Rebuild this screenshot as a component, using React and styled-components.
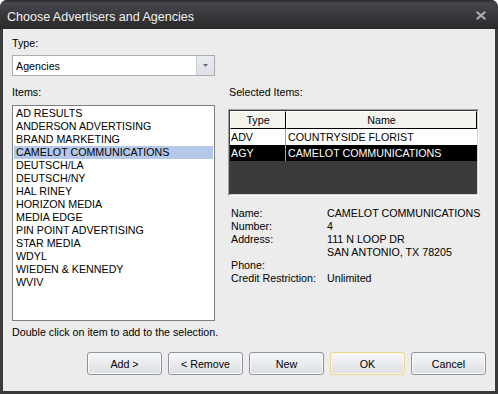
import React from 'react';
import styled, { createGlobalStyle } from 'styled-components';

const GlobalStyle = createGlobalStyle`
	html,
	body {
		margin: 0;
		padding: 0;
		background: #ffffff;
	}
	body {
		font-family: 'Liberation Sans', Arial, sans-serif;
		font-size: 10.7px;
		color: #000;
	}
`;

const Window = styled.div`
	width: 498px;
	height: 394px;
	display: flex;
	flex-direction: column;
	border-radius: 7px 7px 0 0;
	overflow: hidden;
	background: #3b3b3b;
`;

const TitleBar = styled.div`
	height: 29px;
	box-sizing: border-box;
	flex-shrink: 0;
	display: flex;
	align-items: center;
	justify-content: space-between;
	padding: 4px 11px 0 7px;
	background: linear-gradient(#2a2a2e 0px, #46464d 3px, #3b3b40 12px, #2f2f31 24px, #2a2a2a 29px);
	color: #f2f2f2;
	font-size: 12.5px;
`;

const CloseBox = styled.div`
	align-self: flex-start;
	margin-top: 7px;
	width: 12px;
	height: 9px;
	display: flex;
`;

const Frame = styled.div`
	flex: 1;
	display: flex;
	padding: 0 3px 3px 3px;
`;

const Client = styled.div`
	flex: 1;
	display: flex;
	flex-direction: column;
	background: #ececec;
	padding: 8px 9px 0 9px;
`;

const Label = styled.div`
	line-height: 13px;
	height: 13px;
	white-space: nowrap;
	padding-left: ${(p) => p.$indent || 0}px;
	margin-bottom: ${(p) => p.$gap || 0}px;
`;

const Combo = styled.div`
	width: 203px;
	height: 21px;
	box-sizing: border-box;
	display: flex;
	border: 1px solid #a9adb3;
	background: #fff;
`;

const ComboText = styled.div`
	flex: 1;
	display: flex;
	align-items: center;
	padding-left: 3px;
`;

const ComboArrow = styled.div`
	width: 17px;
	display: flex;
	align-items: center;
	justify-content: center;
	border-left: 1px solid #cdd1d6;
	background: linear-gradient(#e8ebef, #dde1e7);
`;

const Panes = styled.div`
	display: grid;
	grid-template-columns: 203px 251px;
	column-gap: 13px;
	margin-top: 10px;
`;

const Column = styled.div`
	display: flex;
	flex-direction: column;
`;

const ListBox = styled.div`
	height: 216px;
	box-sizing: border-box;
	border: 1px solid #7f7f7f;
	background: #fff;
	padding: 1px;
`;

const ListItem = styled.div`
	height: 13px;
	line-height: 13px;
	padding-left: 2px;
	white-space: nowrap;
	background: ${(p) => (p.$selected ? '#b5c8ea' : 'transparent')};
`;

const GridOuter = styled.div`
	height: 87px;
	box-sizing: border-box;
	border: 1px solid;
	border-color: #a0a0a0 #ffffff #ffffff #a0a0a0;
	display: flex;
`;

const GridInner = styled.div`
	flex: 1;
	display: flex;
	flex-direction: column;
	border: 1px solid;
	border-color: #404040 #d4d0c8 #d4d0c8 #404040;
	background: #3b3b3b;
`;

const GridRow = styled.div`
	display: flex;
	height: ${(p) => (p.$header ? 18 : 16)}px;
	box-sizing: border-box;
	background: ${(p) => (p.$header ? '#f4f3ee' : p.$active ? '#000' : '#fff')};
	color: ${(p) => (p.$active ? '#fff' : '#000')};
`;

const HeadCell = styled.div`
	width: ${(p) => (p.$w ? `${p.$w}px` : 'auto')};
	flex: ${(p) => (p.$w ? 'none' : 1)};
	box-sizing: border-box;
	display: flex;
	align-items: center;
	justify-content: center;
	border-top: 1px solid #fff;
	border-left: 1px solid #fff;
	border-right: 1px solid #000;
	border-bottom: 1px solid #000;
`;

const Cell = styled.div`
	width: ${(p) => (p.$w ? `${p.$w}px` : 'auto')};
	flex: ${(p) => (p.$w ? 'none' : 1)};
	box-sizing: border-box;
	display: flex;
	align-items: center;
	padding-left: ${(p) => (p.$w ? 1 : 2)}px;
	border-right: ${(p) => (p.$w ? '1px solid #a0a0a0' : 'none')};
	white-space: nowrap;
	overflow: hidden;
`;

const Details = styled.div`
	display: grid;
	grid-template-columns: 96px auto;
	line-height: 13px;
	margin-top: 11px;
	padding-left: 3px;
	white-space: nowrap;
`;

const Hint = styled.div`
	margin-top: 5px;
	line-height: 13px;
	white-space: nowrap;
`;

const ButtonRow = styled.div`
	display: flex;
	justify-content: flex-end;
	gap: 6px;
	margin-top: 13px;
`;

const Button = styled.button`
	width: 75px;
	height: 23px;
	padding: 0;
	font-family: inherit;
	font-size: 10.7px;
	color: #000;
	border-radius: 3px;
	border: 1px solid ${(p) => (p.$default ? '#e9d690' : '#8e949b')};
	box-shadow: inset 0 0 0 1px ${(p) => (p.$default ? '#fbf5dc' : '#f8f9fa')};
	background: linear-gradient(#f7f8f9, #e9ebee 50%, #dcdfe3);
`;

const items = [
	'AD RESULTS',
	'ANDERSON ADVERTISING',
	'BRAND MARKETING',
	'CAMELOT COMMUNICATIONS',
	'DEUTSCH/LA',
	'DEUTSCH/NY',
	'HAL RINEY',
	'HORIZON MEDIA',
	'MEDIA EDGE',
	'PIN POINT ADVERTISING',
	'STAR MEDIA',
	'WDYL',
	'WIEDEN & KENNEDY',
	'WVIV',
];

const selected = [
	{ type: 'ADV', name: 'COUNTRYSIDE FLORIST' },
	{ type: 'AGY', name: 'CAMELOT COMMUNICATIONS', active: true },
];

const App = () => {
	return (
		<>
			<GlobalStyle />
			<Window>
				<TitleBar>
					<span>Choose Advertisers and Agencies</span>
					<CloseBox>
						<svg width='12' height='9' viewBox='0 0 12 9'>
							<path d='M2.5 1.5 L9.5 7.5 M9.5 1.5 L2.5 7.5' stroke='#a3adb7' strokeWidth='2.2' strokeLinecap='square' />
						</svg>
					</CloseBox>
				</TitleBar>
				<Frame>
					<Client>
						<Label $gap={5}>Type:</Label>
						<Combo>
							<ComboText>Agencies</ComboText>
							<ComboArrow>
								<svg width='5' height='3' viewBox='0 0 5 3'>
									<path d='M0 0 H5 L2.5 3 Z' fill='#6b737d' />
								</svg>
							</ComboArrow>
						</Combo>
						<Panes>
							<Column>
								<Label $gap={6}>Items:</Label>
								<ListBox>
									{items.map((it) => (
										<ListItem key={it} $selected={it === 'CAMELOT COMMUNICATIONS'}>
											{it}
										</ListItem>
									))}
								</ListBox>
							</Column>
							<Column>
								<Label $gap={10} $indent={1}>
									Selected Items:
								</Label>
								<GridOuter>
									<GridInner>
										<GridRow $header>
											<HeadCell $w={56}>Type</HeadCell>
											<HeadCell>Name</HeadCell>
										</GridRow>
										{selected.map((row) => (
											<GridRow key={row.type} $active={row.active}>
												<Cell $w={56}>{row.type}</Cell>
												<Cell>{row.name}</Cell>
											</GridRow>
										))}
									</GridInner>
								</GridOuter>
								<Details>
									<span>Name:</span>
									<span>CAMELOT COMMUNICATIONS</span>
									<span>Number:</span>
									<span>4</span>
									<span>Address:</span>
									<span>111 N LOOP DR</span>
									<span />
									<span>SAN ANTONIO, TX 78205</span>
									<span>Phone:</span>
									<span />
									<span>Credit Restriction:</span>
									<span>Unlimited</span>
								</Details>
							</Column>
						</Panes>
						<Hint>Double click on item to add to the selection.</Hint>
						<ButtonRow>
							<Button>Add &gt;</Button>
							<Button>&lt; Remove</Button>
							<Button>New</Button>
							<Button $default>OK</Button>
							<Button>Cancel</Button>
						</ButtonRow>
					</Client>
				</Frame>
			</Window>
		</>
	);
};

export default App;
